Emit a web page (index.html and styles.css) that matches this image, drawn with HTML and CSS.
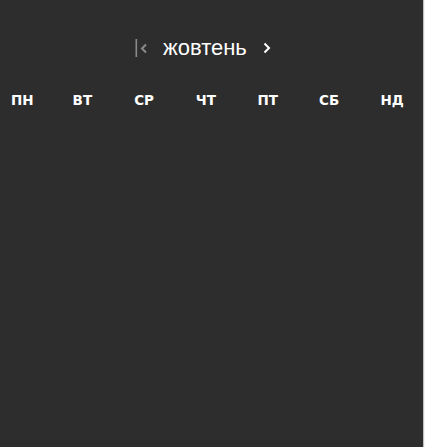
FILE: index.html
```html
<!DOCTYPE html>
<html lang="uk">
<head>
<meta charset="utf-8">
<link rel="stylesheet" href="styles.css">
</head>
<body>
<div class="panel">
  <div class="header">
    <span class="nav first">
      <svg width="14" height="18" viewBox="0 0 14 18"><rect x="0.5" y="0" width="1.6" height="18" fill="#8a8a8a"/><path d="M11 5.5 L7 9.5 L11 13.5" stroke="#8a8a8a" stroke-width="2" fill="none"/></svg>
    </span>
    <span class="month">жовтень</span>
    <span class="nav next">
      <svg width="8" height="12" viewBox="0 0 8 12"><path d="M1.5 1.5 L6 6 L1.5 10.5" stroke="#ffffff" stroke-width="2" fill="none"/></svg>
    </span>
  </div>
  <div class="weekdays">
    <span>ПН</span><span>ВТ</span><span>СР</span><span>ЧТ</span><span>ПТ</span><span>СБ</span><span>НД</span>
  </div>
</div>
</body>
</html>
```
FILE: styles.css
```css
html, body {
  margin: 0;
  padding: 0;
  background: #ffffff;
}
.panel {
  width: 423px;
  height: 447px;
  background: #2d2d2d;
  box-shadow: 1px 0 1px rgba(0,0,0,0.25);
  overflow: hidden;
  font-family: "Liberation Sans", Arial, sans-serif;
  color: #ffffff;
}
.header {
  display: flex;
  align-items: center;
  padding-top: 37px;
  padding-left: 135px;
  height: 22px;
}
.nav {
  display: flex;
  align-items: center;
}
.month {
  font-size: 22px;
  margin-left: 14px;
  margin-right: 16px;
  line-height: 22px;
}
.weekdays {
  display: grid;
  grid-template-columns: repeat(7, 61.6px);
  padding-left: 11px;
  margin-top: 33px;
  font-family: "DejaVu Sans", "Liberation Sans", sans-serif;
  font-size: 13.5px;
  font-weight: bold;
  line-height: 16px;
}
```
